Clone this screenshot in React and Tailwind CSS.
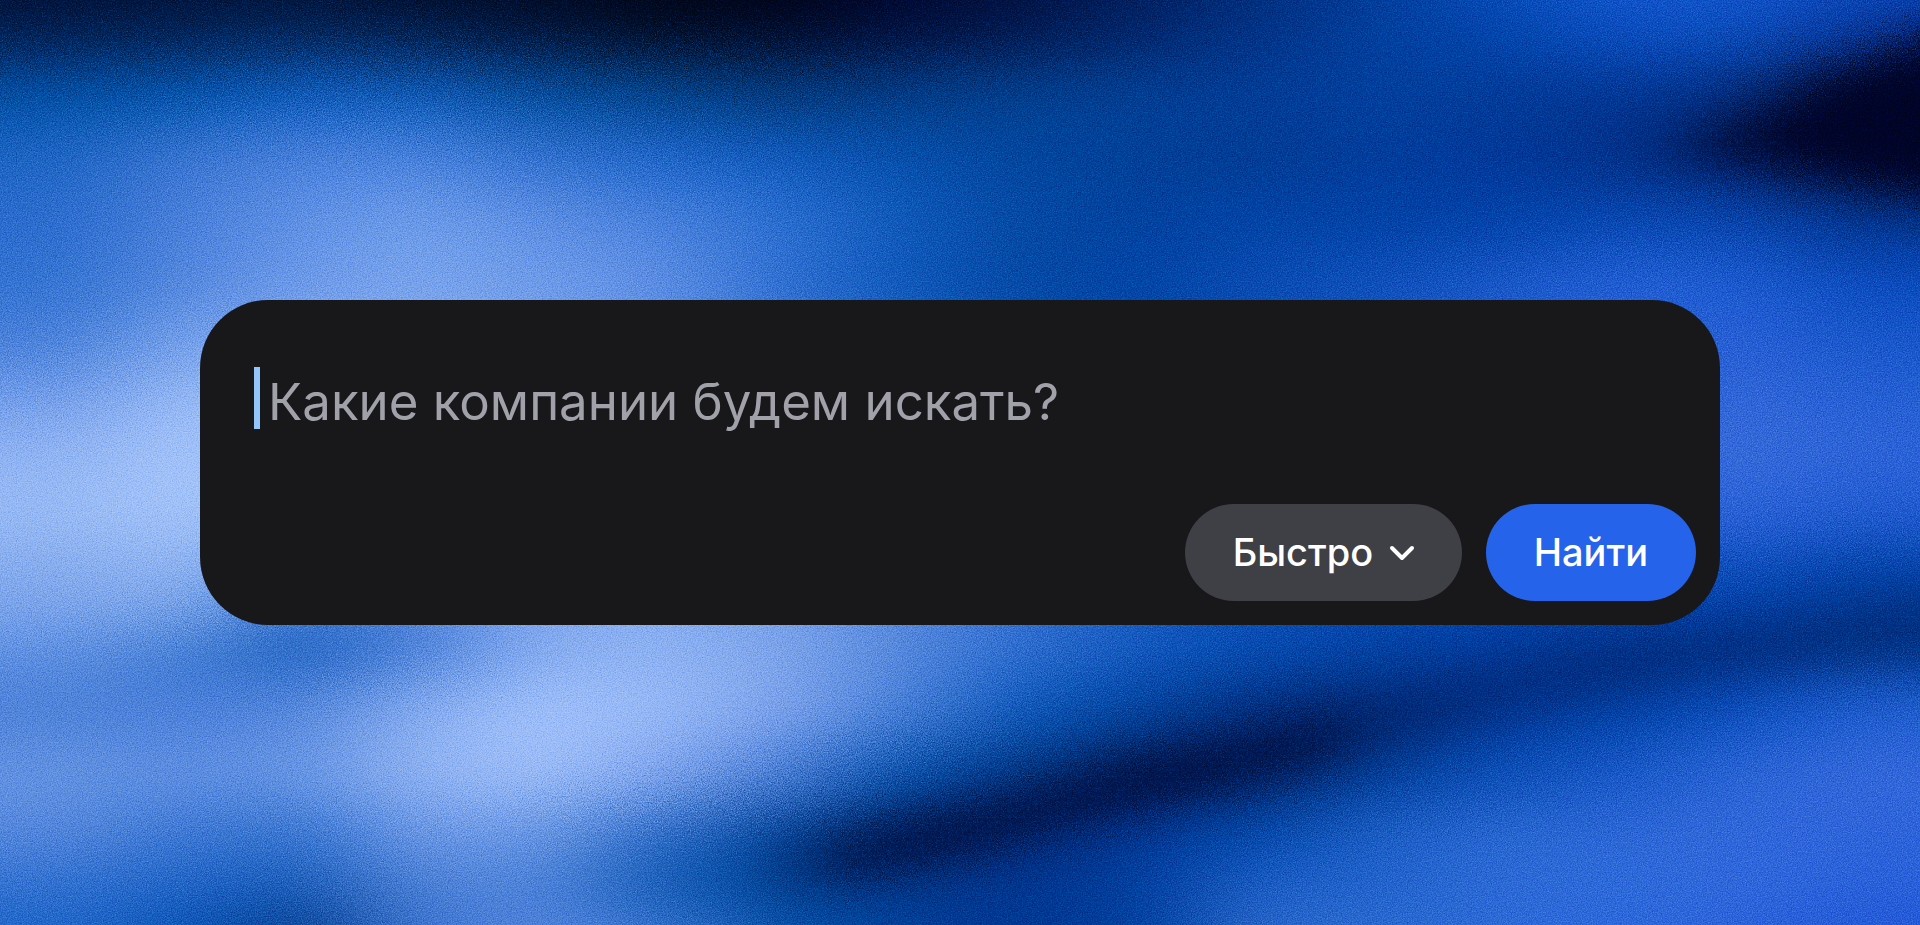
import React, { useState } from 'react';
import { ChevronDown } from 'lucide-react';

// Backdrop colours: one entry per band, sampled every 120 units from left to right
const bands = [
  { y: -30, colors: ['#000c2c', '#000c2c', '#000a28', '#000820', '#000618', '#000310', '#00020f', '#000426', '#000d3a', '#001a58', '#002a78', '#003c9a', '#0c4ec0', '#1558d2', '#1558d2', '#0c4ac0'] },
  { y: 31, colors: ['#001d4f', '#001f52', '#00245a', '#001c4a', '#00143a', '#000c25', '#000a28', '#000f3c', '#00184e', '#00246a', '#003287', '#003f9f', '#0045ad', '#0a4fc2', '#0a4ec0', '#0638a0'] },
  { y: 95, colors: ['#0050a8', '#0055b0', '#0b5cbf', '#0b5cbc', '#004fa3', '#00448f', '#003a80', '#003c88', '#003f90', '#003f96', '#003c98', '#003f9e', '#003a98', '#003594', '#002d80', '#00062a'] },
  { y: 158, colors: ['#1c66c4', '#3a76d2', '#4a82dc', '#4a84de', '#3272d0', '#1c67cc', '#0f5bbf', '#0650ae', '#0046a0', '#003f98', '#003a94', '#003c9c', '#00379a', '#002f88', '#00206b', '#000b35'] },
  { y: 220, colors: ['#2a6cce', '#4880da', '#5f92e5', '#6f9ee9', '#5e90e4', '#4a82dc', '#2a70d2', '#0e5abb', '#0449a4', '#0041a0', '#0044a8', '#0041a6', '#0042aa', '#0648b4', '#0645b0', '#00348f'] },
  { y: 285, colors: ['#3274d2', '#5388de', '#6c9ae8', '#7aa5ec', '#6f9de9', '#5f90e4', '#2e70d2', '#0c58bc', '#0448a4', '#0044a6', '#0a4cb4', '#0e50bc', '#1858c8', '#2260d6', '#1c5cd2', '#0a4cc0'] },
  { y: 347, colors: ['#4a82da', '#76a2ea', '#86acf0', '#84acee', '#74a0ea', '#5a8ee2', '#3a78d6', '#1c62c4', '#0c50b0', '#0648a8', '#0a4cb2', '#1555c4', '#205ed2', '#2560d4', '#2860d6', '#1858cc'] },
  { y: 400, colors: ['#749fea', '#98baf4', '#9fc0f6', '#90b4f2', '#80a8ee', '#6a98e6', '#4a80da', '#2a6ccc', '#1456b8', '#0c4cb0', '#1050b8', '#1c5aca', '#2a64d6', '#2e66d8', '#3067d8', '#2460d4'] },
  { y: 450, colors: ['#90b4f2', '#a4c4f9', '#9fc0f6', '#90b4f2', '#80a8ee', '#6a98e6', '#4a80da', '#2a6ccc', '#1456b8', '#0c4cb0', '#1050b8', '#1c5aca', '#2a64d6', '#346ad8', '#366cda', '#2c64d8'] },
  { y: 510, colors: ['#98bbf4', '#a4c4f9', '#9fc0f6', '#90b4f2', '#80a8ee', '#6a98e6', '#4a80da', '#2a6ccc', '#1456b8', '#0c4cb0', '#1050b8', '#1c5aca', '#2a64d6', '#2e66d8', '#2a63d8', '#205cd2'] },
  { y: 578, colors: ['#84abec', '#8eb3f0', '#6898e4', '#6898e4', '#80a8ee', '#80a8ee', '#6a98e6', '#4a80da', '#2a6ccc', '#1456b8', '#0c4cb0', '#0c4cb8', '#0c4cb8', '#0c4cb8', '#0a4cbc', '#0041a6'] },
  { y: 620, colors: ['#7aa4ea', '#78a3e8', '#2a6cc8', '#4a80d8', '#80a8ee', '#8ab0f0', '#7ca4ea', '#5a8ce0', '#3472d2', '#165cc2', '#0a4eb8', '#0648b2', '#0044ae', '#0040a4', '#003ca0', '#003790'] },
  { y: 647, colors: ['#5a8ee0', '#3c7ad2', '#1860c0', '#4a80d8', '#86adf0', '#90b4f2', '#7ea6ea', '#5488dc', '#2c6ed0', '#1058c0', '#034cb4', '#0040a0', '#00389a', '#003490', '#003898', '#003c98'] },
  { y: 710, colors: ['#4c82d8', '#4a80da', '#5588dc', '#88aef0', '#a2c2fa', '#98baf6', '#80a5ec', '#4a82da', '#0a58bc', '#0043a0', '#002e80', '#002c7c', '#003a9c', '#0042a8', '#0a4fc0', '#1e5ed0'] },
  { y: 773, colors: ['#6494e2', '#5e90e2', '#6897e4', '#92b5f2', '#a0c0f8', '#84a8ee', '#4a80d8', '#0250ae', '#003888', '#002060', '#002a74', '#003f9c', '#0a4eb8', '#1658c8', '#2a66d6', '#3268da'] },
  { y: 835, colors: ['#5488dc', '#3c78d4', '#3474d0', '#6b98e6', '#6a98e4', '#2a6cc8', '#00449c', '#002a70', '#002c7c', '#003798', '#0048ac', '#1c60c8', '#2868d2', '#2c68d6', '#3068da', '#2c64da'] },
  { y: 885, colors: ['#2f70d0', '#1c64c6', '#165cba', '#4a80d4', '#4a82d8', '#0e58b4', '#00469a', '#003a90', '#003592', '#003f9e', '#1c5fc8', '#1f62cc', '#2c6bd6', '#2c6bda', '#2f69dc', '#2862da'] },
  { y: 935, colors: ['#1c66c8', '#0a54b8', '#043c8a', '#3a74d2', '#5486de', '#3a78d2', '#0a54b0', '#00409a', '#003590', '#003fa0', '#2a6acc', '#2a6bd0', '#2c6ad8', '#2c68da', '#2a62da', '#2058d6'] },
];

const bandTop = (i) => (i === 0 ? -150 : (bands[i - 1].y + bands[i].y) / 2);
const bandBottom = (i) => (i === bands.length - 1 ? 1075 : (bands[i].y + bands[i + 1].y) / 2);

const Backdrop = () => (
  <svg
    className="absolute inset-0 h-full w-full"
    viewBox="0 0 1920 925"
    preserveAspectRatio="none"
    aria-hidden="true"
  >
    <defs>
      {bands.map((band, i) => (
        <linearGradient key={band.y} id={`band-${i}`} gradientUnits="userSpaceOnUse" x1="60" y1="0" x2="1860" y2="0">
          {band.colors.map((color, j) => (
            <stop key={j} offset={j / (band.colors.length - 1)} stopColor={color} />
          ))}
        </linearGradient>
      ))}
      <filter id="soften" filterUnits="userSpaceOnUse" x="-100" y="-100" width="2120" height="1125" colorInterpolationFilters="sRGB">
        <feGaussianBlur stdDeviation="36 24" result="soft" />
        <feTurbulence type="fractalNoise" baseFrequency="0.85" numOctaves="2" seed="4" result="noise" />
        <feDisplacementMap in="soft" in2="noise" scale="110" xChannelSelector="R" yChannelSelector="G" />
      </filter>
      <filter id="shade" filterUnits="userSpaceOnUse" x="400" y="-200" width="1800" height="1400" colorInterpolationFilters="sRGB">
        <feGaussianBlur stdDeviation="26 18" result="soft" />
        <feTurbulence type="fractalNoise" baseFrequency="0.85" numOctaves="2" seed="9" result="noise" />
        <feDisplacementMap in="soft" in2="noise" scale="110" xChannelSelector="R" yChannelSelector="G" />
      </filter>
      <filter id="grain" x="0" y="0" width="100%" height="100%" colorInterpolationFilters="sRGB">
        <feTurbulence type="fractalNoise" baseFrequency="0.8" numOctaves="2" seed="2" />
        <feColorMatrix values="1.6 0 0 0 -0.3  1.6 0 0 0 -0.3  1.6 0 0 0 -0.3  0 0 0 0 1" />
      </filter>
    </defs>
    <g filter="url(#soften)">
      {bands.map((band, i) => (
        <rect key={band.y} x="-100" y={bandTop(i)} width="2120" height={bandBottom(i) - bandTop(i) + 1} fill={`url(#band-${i})`} />
      ))}
    </g>
    <g filter="url(#shade)">
      <path d="M2060 -20L1920 40L1840 84L1750 122L1660 146L1800 164L1900 184L2060 220Z" fill="#000426" />
      <path d="M770 872C900 850 1020 815 1130 785C1230 758 1330 742 1440 706C1560 668 1740 654 1980 620" fill="none" stroke="#000a3c" strokeOpacity="0.3" strokeWidth="50" />
      <path d="M850 858C960 832 1060 806 1140 783C1210 764 1270 754 1330 736" fill="none" stroke="#000a34" strokeOpacity="0.75" strokeWidth="42" strokeLinecap="round" />
    </g>
    <rect width="1920" height="925" filter="url(#grain)" className="opacity-40 mix-blend-soft-light" />
  </svg>
);

const App = () => {
  const [query, setQuery] = useState('');
  const [mode, setMode] = useState('fast');

  return (
    <main className="relative isolate flex min-h-screen items-center overflow-hidden bg-[#0046a0] px-6 font-['Inter',sans-serif] lg:px-[200px]">
      <Backdrop />

      <form
        onSubmit={(e) => e.preventDefault()}
        className="relative w-full rounded-[68px] bg-zinc-900 pt-[67px] pr-6 pb-6 pl-[54px]"
      >
        <div className="flex items-start gap-2">
          {!query && <span className="h-[62px] w-[6px] shrink-0 bg-[#93c5fd]" />}
          <input
            type="text"
            aria-label="Поисковый запрос"
            placeholder="Какие компании будем искать?"
            value={query}
            onChange={(e) => setQuery(e.target.value)}
            className="h-[71px] min-w-0 flex-1 bg-transparent text-[51px] text-white caret-[#93c5fd] outline-none placeholder:text-[#a1a1aa]"
          />
        </div>

        <div className="mt-[66px] flex justify-end gap-6 text-[38px] font-medium text-white">
          <div className="relative">
            <select
              aria-label="Режим поиска"
              value={mode}
              onChange={(e) => setMode(e.target.value)}
              className="h-[97px] appearance-none rounded-full bg-[#3f3f46] pr-[88px] pl-12 outline-none"
            >
              <option value="fast">Быстро</option>
            </select>
            <ChevronDown className="pointer-events-none absolute inset-y-0 right-10 my-auto size-10" strokeWidth={2.4} />
          </div>
          <button type="submit" className="h-[97px] rounded-full bg-[#2563eb] px-12">
            Найти
          </button>
        </div>
      </form>
    </main>
  );
};

export default App;
